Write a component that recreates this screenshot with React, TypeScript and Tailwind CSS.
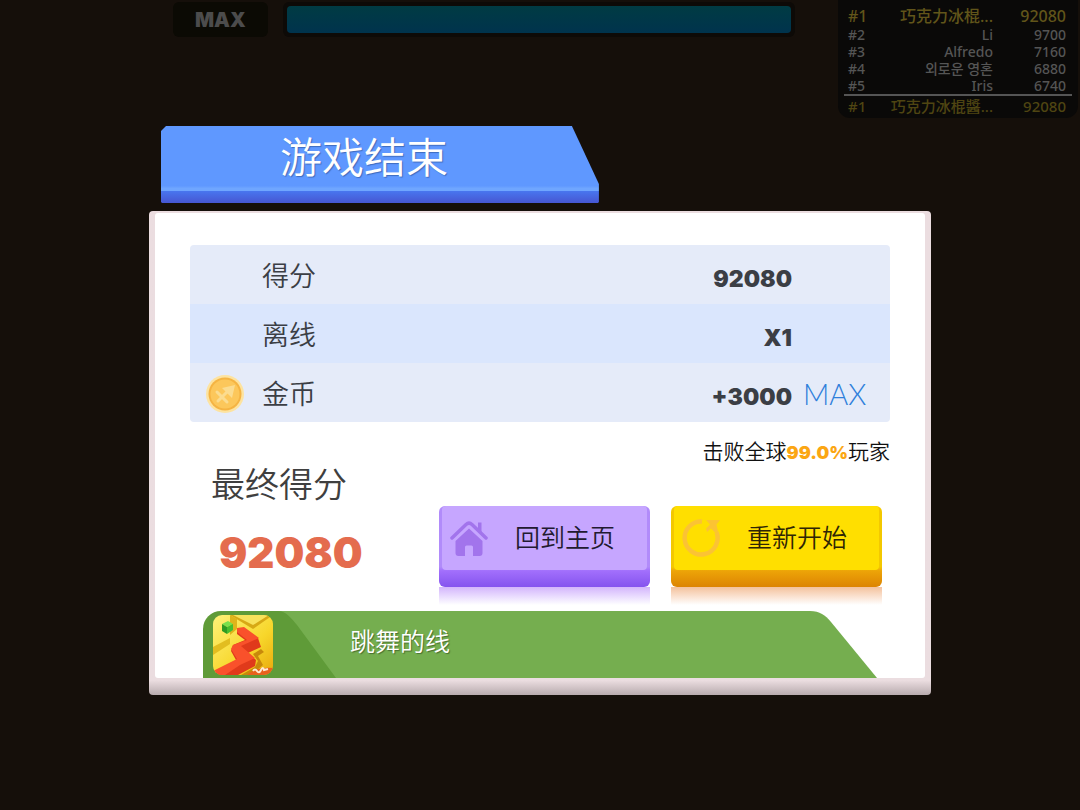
import React from 'react'

const players = [
    { rank: '#1', name: '巧克力冰棍...', score: '92080' },
    { rank: '#2', name: 'Li', score: '9700' },
    { rank: '#3', name: 'Alfredo', score: '7160' },
    { rank: '#4', name: '외로운 영혼', score: '6880' },
    { rank: '#5', name: 'Iris', score: '6740' },
]

const Leaderboard = () => {
    return (
        <div className="w-60 h-[118px] shrink-0 mr-0.5 px-1.5 pt-1.5 rounded-b-xl bg-[#0a0908] font-['Noto_Sans','Noto_Sans_CJK_SC','Noto_Sans_CJK_KR',sans-serif] text-[#555555]">
            <table className="w-full">
                <tbody>
                    {players.map((p, i) => (
                        <tr key={p.rank} className={i === 0 ? 'text-[16px] leading-5 font-medium text-[#61551a]' : 'text-[14px] leading-[17px] font-medium'}>
                            <td className="w-8 pl-1 align-top">{p.rank}</td>
                            <td className="text-right align-top">{p.name}</td>
                            <td className="w-[79px] pr-1.5 text-right align-top">{p.score}</td>
                        </tr>
                    ))}
                </tbody>
                <tfoot>
                    <tr className="border-t-2 border-[#555555] text-[15px] leading-5 font-medium text-[#4f4512]">
                        <td className="pl-1">#1</td>
                        <td className="text-right">巧克力冰棍醬...</td>
                        <td className="pr-1.5 text-right">92080</td>
                    </tr>
                </tfoot>
            </table>
        </div>
    )
}

const CoinIcon = () => (
    <svg viewBox="0 0 40 40" className="size-10" aria-hidden="true">
        <circle cx="20" cy="20" r="19" fill="#fde3a0" />
        <circle cx="20" cy="20" r="16.500" fill="#f5b443" />
        <circle cx="20" cy="20" r="14.500" fill="#fcc75b" />
        <g stroke="#fbdc90" strokeWidth="3" strokeLinecap="round" fill="none">
            <path d="M13 27L26 14" />
            <path d="M12 18L22 28" />
        </g>
        <path d="M30 11L17 14l10 10z" fill="#fbdc90" />
    </svg>
)

const HomeIcon = () => (
    <svg viewBox="0 0 38 36" className="w-[38px] h-9" fill="none" aria-hidden="true">
        <path d="M2 18L16 4.500Q19 1.800 22 4.500L36 18" stroke="#a274ec" strokeWidth="3.500" strokeLinecap="round" />
        <path d="M28 2.500h3.500v10L28 9z" fill="#a274ec" />
        <path d="M5.500 21L19 8.500 32.500 21v12q0 3-3 3H23v-9q0-1.500-1.500-1.500h-5Q15 25.500 15 27v9H8.500q-3 0-3-3z" fill="#a274ec" />
    </svg>
)

const RestartIcon = () => (
    <svg viewBox="0 0 40 40" className="size-10" fill="none" aria-hidden="true">
        <path d="M21 3.500A16.500 16.500 0 1 0 35.500 14" stroke="#fbc334" strokeWidth="4.500" />
        <path d="M25 2h14l-3.500 4.500 1.500 7-3 1-4-4-4 3.500-1-3.500 4-4z" fill="#fbc334" />
    </svg>
)

const GameIcon = () => (
    <svg viewBox="0 0 60 60" className="size-[60px] rounded-[9px]" aria-hidden="true">
        <defs>
            <linearGradient id="ground" x1="0" y1="0" x2="1" y2="1">
                <stop offset="0" stopColor="#fff27a" />
                <stop offset="0.6" stopColor="#f7d62a" />
                <stop offset="1" stopColor="#e9a80c" />
            </linearGradient>
        </defs>
        <path d="M0 0h60v60H0z" fill="url(#ground)" />
        <path d="M17 0h43L40 14z" fill="#d7a915" />
        <path d="M20 0h36L40 10z" fill="#f8e25b" />
        <path d="M17 0v20l7-6V4z" fill="#dfb41b" />
        <path d="M0 32l17-9v6L0 40z" fill="#e2bd20" />
        <path d="M48 34l-8 5 5 7-3 6-14 8h10l12-10-5-9 6-4z" fill="#c8890b" />
        {/* sides of the line */}
        <path d="M24 13v6l8 6-12 5-2 6 5 9L2 60h23l17-9 1-6-8-7 13-6-3-9z" fill="#e03a1b" />
        {/* top of the line */}
        <path d="M24 13l7-1 15 11-18 8 14 12-15 7-15 10H0v-4l24-12-6-10 2-4 14-5-10-8z" fill="#f9512b" />
        <path d="M9 9l6-3 5 3-6 3z" fill="#7ae04c" />
        <path d="M9 9l5 3v7l-5-3z" fill="#2e9a22" />
        <path d="M14 12l6-3v6l-6 4z" fill="#48bd2e" />
        <path d="M34 60q10-9 26-7v7z" fill="#e8611c" />
        <path d="M40 56q2-3 4 0t4-1 3 0l4-1" stroke="#ffe9d2" strokeWidth="2" fill="none" />
    </svg>
)

const App = () => {
    return (
        <div className="min-h-screen overflow-hidden bg-[#150f0a] font-['Noto_Sans_CJK_SC',sans-serif]">
            {/* top bar */}
            <header className="flex items-start h-[126px] pl-[16%]">
                <div className="flex items-center justify-center w-[95px] h-[35px] mt-0.5 shrink-0 rounded-md bg-[#0b0a04] font-['Inter',sans-serif] text-xl font-black text-[#4c4c4c]">
                    MAX
                </div>
                <div className="flex-1 h-[35px] ml-[15px] mr-[43px] mt-0.5 p-1 rounded-md bg-[#0d0a07]">
                    <div className="h-full rounded-sm bg-linear-to-b from-[#003b43] to-[#00334d]"></div>
                </div>
                <Leaderboard />
            </header>

            <main className="w-full max-w-[782px] mx-auto">
                {/* title banner */}
                <div className="w-[56%] ml-3 mb-2 flex flex-col [clip-path:polygon(5px_0,calc(100%-27px)_0,100%_58px,100%_76px,calc(100%-1px)_100%,1px_100%,0_76px,0_5px)]">
                    <h1 className="h-[65px] pr-8 bg-linear-to-b from-[#5f98ff] from-92% to-[#6fa6ff] to-96% text-center text-[42px] leading-[58px] font-[350] text-white [text-shadow:1px_1px_1px_#3f6cbf]">
                        游戏结束
                    </h1>
                    <div className="h-3 bg-linear-to-b from-[#4876ef] to-[#4656d2]"></div>
                </div>

                {/* result card */}
                <div className="px-1.5 pt-0.5 pb-[17px] rounded-[4px] bg-linear-to-b from-[#ebdde0] from-97% to-[#b8abae]">
                    <div className="px-[35px] pt-8 rounded-[3px] bg-white">
                        <table className="w-full overflow-hidden rounded-[4px] text-[#3b3e45]">
                            <tbody>
                                <tr className="h-[59px] bg-[#e5ebf9]">
                                    <td className="w-[72px]"></td>
                                    <th scope="row" className="text-left text-[27px] leading-10 font-[350]">得分</th>
                                    <td className="pt-2.5 text-right font-['Inter',sans-serif] text-[23px] font-black">92080</td>
                                    <td className="w-[98px]"></td>
                                </tr>
                                <tr className="h-[59px] bg-[#dae6fd]">
                                    <td></td>
                                    <th scope="row" className="text-left text-[27px] leading-10 font-[350]">离线</th>
                                    <td className="pt-2.5 text-right font-['Inter',sans-serif] text-[23px] font-black">X1</td>
                                    <td></td>
                                </tr>
                                <tr className="h-[59px] bg-[#e5ebf9]">
                                    <td className="pl-[15px] pt-0.5"><CoinIcon /></td>
                                    <th scope="row" className="text-left text-[27px] leading-10 font-[350]">金币</th>
                                    <td className="pt-2.5 text-right font-['Inter',sans-serif] text-[23px] font-black">+3000</td>
                                    <td className="pl-[11px] pt-0.5 font-['Lato',sans-serif] text-[29px] leading-10 font-light text-[#2f7fdb]">MAX</td>
                                </tr>
                            </tbody>
                        </table>

                        <div className="flex justify-between pl-[21px]">
                            <div className="pt-[38px]">
                                <h2 className="text-[34px] leading-[46px] font-[350] text-[#3f3f3f]">最终得分</h2>
                                <p className="pl-2 pt-[22px] font-['Inter',sans-serif] text-[42px] leading-[50px] font-black text-[#e46c4e]">92080</p>
                            </div>
                            <div>
                                <p className="pt-3 text-right text-[21px] leading-8 font-[350] text-[#111111]">
                                    击败全球<span className="font-['Inter',sans-serif] text-[18px] font-black text-[#fba613]">99.0%</span>玩家
                                </p>
                                <div className="flex gap-[21px] pt-[37px] pr-2">
                                    <button className="relative w-[211px] h-[81px] rounded-md bg-linear-to-b from-[#b18bfa] from-75% via-[#a26ffc] via-80% to-[#8553ee]">
                                        <span className="flex items-center h-16 mx-[3px] mb-[17px] pl-2 rounded-[4px] bg-[#c6a6ff] text-[25px] font-[350] text-[#221a30]">
                                            <HomeIcon />
                                            <span className="ml-[27px] pb-0.5">回到主页</span>
                                        </span>
                                        <span className="absolute left-0 top-full w-full h-[18px] bg-linear-to-b from-[#d3b5fb] to-white"></span>
                                    </button>
                                    <button className="relative w-[211px] h-[81px] rounded-md bg-linear-to-b from-[#f3c800] from-75% via-[#eda408] via-80% to-[#dc8403]">
                                        <span className="flex items-center h-16 mx-[3px] mb-[17px] pl-[7px] rounded-[4px] bg-[#ffdf00] text-[25px] font-[350] text-[#2e2505]">
                                            <RestartIcon />
                                            <span className="ml-[26px] pb-0.5">重新开始</span>
                                        </span>
                                        <span className="absolute left-0 top-full w-full h-[18px] bg-linear-to-b from-[#f3c19c] to-white"></span>
                                    </button>
                                </div>
                            </div>
                        </div>

                        {/* promoted game */}
                        <a href="#" className="flex h-[67px] ml-[13px] mr-[13px] mt-6 text-white">
                            <span className="flex items-center w-[70px] pl-2.5 rounded-tl-[18px] bg-[#5f9b38]">
                                <GameIcon />
                            </span>
                            <span className="flex flex-1 bg-[#75ae4f]">
                                <svg viewBox="0 0 63 67" className="w-[63px] h-[67px]" aria-hidden="true">
                                    <path d="M0 0H5C13 0 19 8 24 14L63 67H0Z" fill="#5f9b38" />
                                </svg>
                                <span className="pl-3.5 text-[25px] leading-[58px] font-[350] [text-shadow:1px_1px_1px_#476f30]">跳舞的线</span>
                            </span>
                            <svg viewBox="0 0 74 67" className="w-[74px] h-[67px]" aria-hidden="true">
                                <path d="M0 0H7C17 0 22 4 28 11L74 67H0Z" fill="#75ae4f" />
                            </svg>
                        </a>
                    </div>
                </div>
            </main>
        </div>
    )
}

export default App
